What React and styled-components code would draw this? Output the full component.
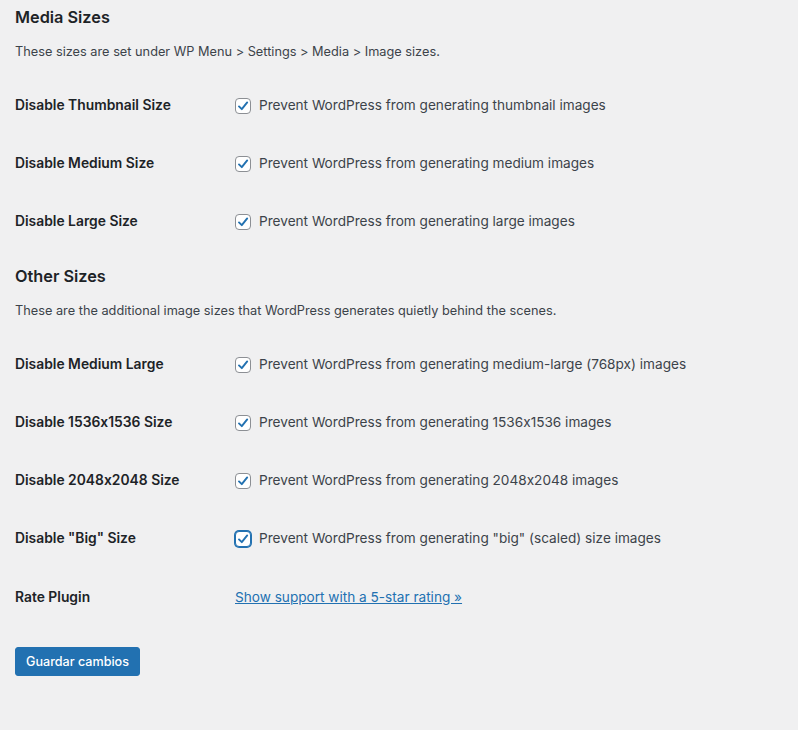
import React from "react";
import styled, { createGlobalStyle, css } from "styled-components";

const Global = createGlobalStyle`
  html, body { margin: 0; padding: 0; background: #f0f0f1; }
  body {
    font-family: Inter, "Open Sans", "Liberation Sans", sans-serif;
    font-feature-settings: "calt" 0;
    color: #3c434a;
    font-size: 13px;
    line-height: 1.4;
  }
`;

const Page = styled.div`
  padding: 5px 15px 40px;
  min-height: 730px;
  box-sizing: border-box;
`;

const Heading = styled.h2`
  margin: 0;
  font-size: 16.3px;
  line-height: 24px;
  font-weight: 600;
  color: #1d2327;
`;

const Description = styled.p`
  margin: 13px 0 0;
  font-size: 12.75px;
  line-height: 20px;
  color: #3c434a;
`;

const Table = styled.div`
  display: flex;
  flex-direction: column;
  margin-top: 15px;
  margin-bottom: ${(p) => (p.$last ? "0" : "13px")};
`;

const Row = styled.div`
  display: flex;
  align-items: center;
  height: ${(p) => (p.$tall ? "60px" : "58px")};
`;

const Label = styled.div`
  width: 220px;
  flex: none;
  font-size: 13.85px;
  font-weight: 600;
  color: #1d2327;
`;

const Cell = styled.label`
  display: flex;
  align-items: center;
  font-size: 13.62px;
  color: #3c434a;
`;

const Box = styled.span`
  width: 16px;
  height: 16px;
  box-sizing: border-box;
  border: 1px solid #8c8f94;
  border-radius: 4px;
  background: #fff;
  display: inline-flex;
  align-items: center;
  justify-content: center;
  margin-right: 8px;
  ${(p) =>
    p.$focus &&
    css`
      border-color: #2271b1;
      box-shadow: 0 0 0 1px #2271b1;
    `}
`;

const Link = styled.a`
  color: #2271b1;
  text-decoration: underline;
  font-size: 13.62px;
  cursor: pointer;
`;

const Submit = styled.div`
  padding-top: 19px;
`;

const Button = styled.button`
  background: #2271b1;
  border: 1px solid #2271b1;
  color: #fff;
  font-family: inherit;
  font-size: 12.6px;
  font-weight: 500;
  height: 29px;
  width: 125px;
  border-radius: 3px;
  padding: 0 10px;
  cursor: pointer;
`;

const Check = () => (
  <svg width="12" height="12" viewBox="0 0 12 12" aria-hidden="true">
    <path d="M2 6.4 L4.8 9.2 L10.2 2.4" fill="none" stroke="#2271b1" strokeWidth="1.9" strokeLinecap="round" strokeLinejoin="round" />
  </svg>
);

const Option = ({ label, text, focus }) => (
  <Row>
    <Label>{label}</Label>
    <Cell>
      <Box $focus={focus}>
        <Check />
      </Box>
      {text}
    </Cell>
  </Row>
);

export default function App() {
  return (
    <>
      <Global />
      <Page>
        <Heading>Media Sizes</Heading>
        <Description>These sizes are set under WP Menu &gt; Settings &gt; Media &gt; Image sizes.</Description>
        <Table>
          <Option label="Disable Thumbnail Size" text="Prevent WordPress from generating thumbnail images" />
          <Option label="Disable Medium Size" text="Prevent WordPress from generating medium images" />
          <Option label="Disable Large Size" text="Prevent WordPress from generating large images" />
        </Table>
        <Heading>Other Sizes</Heading>
        <Description>These are the additional image sizes that WordPress generates quietly behind the scenes.</Description>
        <Table $last>
          <Option label="Disable Medium Large" text="Prevent WordPress from generating medium-large (768px) images" />
          <Option label="Disable 1536x1536 Size" text="Prevent WordPress from generating 1536x1536 images" />
          <Option label="Disable 2048x2048 Size" text="Prevent WordPress from generating 2048x2048 images" />
          <Option label={'Disable "Big" Size'} text={'Prevent WordPress from generating "big" (scaled) size images'} focus />
          <Row $tall>
            <Label>Rate Plugin</Label>
            <Link>Show support with a 5-star rating »</Link>
          </Row>
        </Table>
        <Submit>
          <Button>Guardar cambios</Button>
        </Submit>
      </Page>
    </>
  );
}
